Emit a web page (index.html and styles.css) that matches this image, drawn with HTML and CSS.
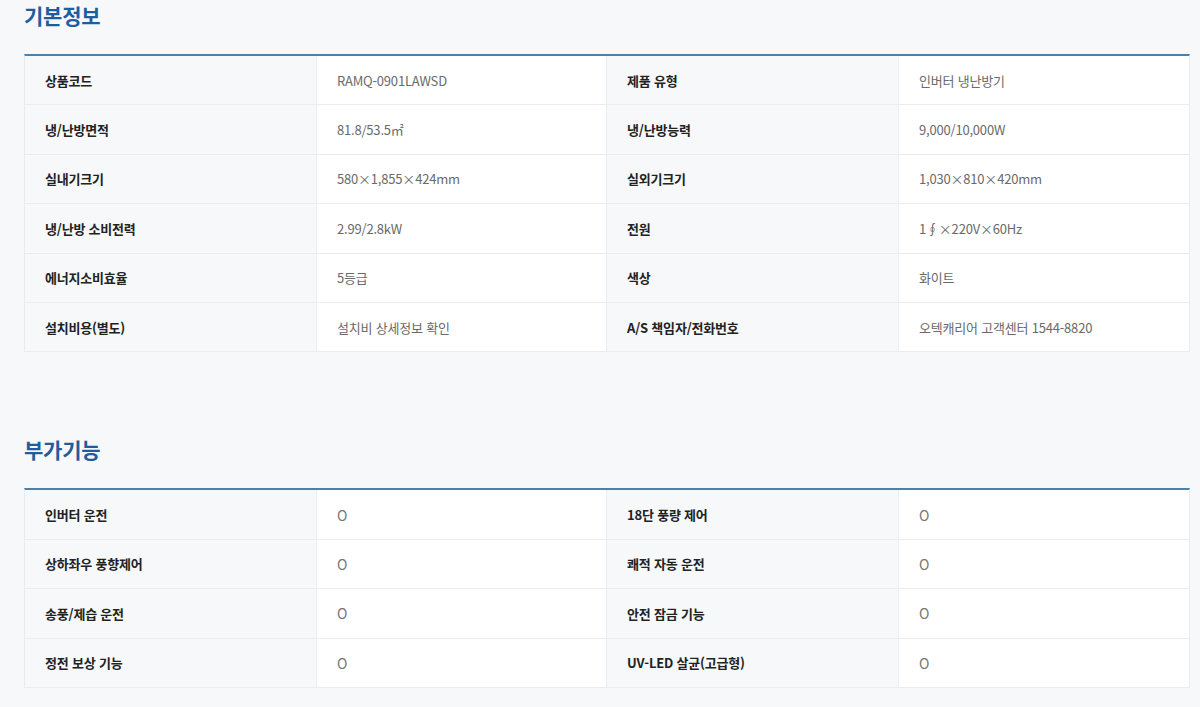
FILE: index.html
```html
<!DOCTYPE html>
<html lang="ko">
<head>
<meta charset="utf-8">
<link rel="stylesheet" href="styles.css">
</head>
<body>
<div class="page">
  <section class="section">
    <h2 class="title">기본정보</h2>
    <div class="spec">
      <div class="row">
        <div class="th">상품코드</div><div class="td">RAMQ-0901LAWSD</div>
        <div class="th">제품 유형</div><div class="td">인버터 냉난방기</div>
      </div>
      <div class="row">
        <div class="th">냉/난방면적</div><div class="td">81.8/53.5㎡</div>
        <div class="th">냉/난방능력</div><div class="td">9,000/10,000W</div>
      </div>
      <div class="row">
        <div class="th">실내기크기</div><div class="td">580×1,855×424mm</div>
        <div class="th">실외기크기</div><div class="td">1,030×810×420mm</div>
      </div>
      <div class="row">
        <div class="th">냉/난방 소비전력</div><div class="td">2.99/2.8kW</div>
        <div class="th">전원</div><div class="td">1∮×220V×60Hz</div>
      </div>
      <div class="row">
        <div class="th">에너지소비효율</div><div class="td">5등급</div>
        <div class="th">색상</div><div class="td">화이트</div>
      </div>
      <div class="row">
        <div class="th">설치비용(별도)</div><div class="td">설치비 상세정보 확인</div>
        <div class="th">A/S 책임자/전화번호</div><div class="td">오텍캐리어 고객센터 1544-8820</div>
      </div>
    </div>
  </section>

  <section class="section section-second">
    <h2 class="title">부가기능</h2>
    <div class="spec">
      <div class="row">
        <div class="th">인버터 운전</div><div class="td mark">O</div>
        <div class="th">18단 풍량 제어</div><div class="td mark">O</div>
      </div>
      <div class="row">
        <div class="th">상하좌우 풍향제어</div><div class="td mark">O</div>
        <div class="th">쾌적 자동 운전</div><div class="td mark">O</div>
      </div>
      <div class="row">
        <div class="th">송풍/제습 운전</div><div class="td mark">O</div>
        <div class="th">안전 잠금 기능</div><div class="td mark">O</div>
      </div>
      <div class="row">
        <div class="th">정전 보상 기능</div><div class="td mark">O</div>
        <div class="th">UV-LED 살균(고급형)</div><div class="td mark">O</div>
      </div>
    </div>
  </section>
</div>
</body>
</html>
```

FILE: styles.css
```css
* {
  box-sizing: border-box;
}

html, body {
  margin: 0;
  padding: 0;
  background: #f6f8fa;
}

body {
  font-family: "Noto Sans CJK KR", "Noto Sans", sans-serif;
  color: #222;
}

.page {
  padding: 0 10px 0 24px;
}

.section-second {
  margin-top: 82px;
}

.title {
  margin: 0 0 24px;
  font-size: 21px;
  line-height: 30px;
  font-weight: 700;
  color: #1f5d9f;
  letter-spacing: -0.2px;
}

.spec {
  border-top: 2px solid #4a80aa;
  border-left: 1px solid #e8ecef;
  border-right: 1px solid #e8ecef;
  background: #fff;
}

.row {
  display: grid;
  grid-template-columns: 1fr 1fr 1fr 1fr;
  height: 49.4px;
  border-bottom: 1px solid #e9edf0;
}

.th,
.td {
  display: flex;
  align-items: center;
  padding: 0 20px;
  font-size: 13px;
  letter-spacing: -0.2px;
}

.th {
  background: #f6f8fa;
  font-weight: 700;
  color: #222;
}

.td {
  background: #fff;
  color: #6a6a6a;
  font-weight: 400;
  border-left: 1px solid #eceff2;
  border-right: 1px solid #eceff2;
}

.row .td:last-child {
  border-right: none;
}

.mark {
  font-size: 14px;
  color: #777;
}
```
